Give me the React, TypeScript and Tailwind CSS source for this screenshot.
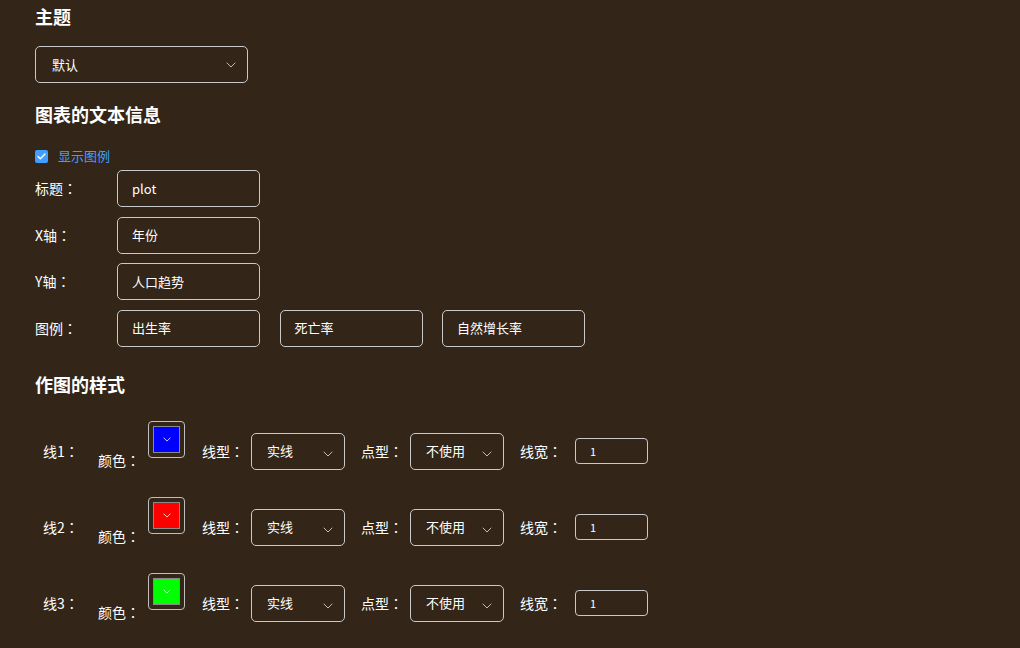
import React from "react";

const font = { fontFamily: '"Noto Sans CJK SC", "Noto Sans", sans-serif' };

function C() {
  return <span style={{ fontFamily: '"Noto Sans CJK TC", sans-serif' }}>：</span>;
}

function Chevron({ className }: { className?: string }) {
  return (
    <svg className={className} width="10" height="6" viewBox="0 0 10 6" fill="none">
      <path d="M1 1l4 4 4-4" stroke="currentColor" strokeWidth="1" strokeLinecap="round" strokeLinejoin="round" />
    </svg>
  );
}

function TextBox({ value }: { value: string }) {
  return (
    <div className="flex h-[37px] w-[143px] items-center rounded-[5px] border border-[#c9c9c9] pl-[14px] text-[13px] text-white">
      {value}
    </div>
  );
}

function LineSelect({ value }: { value: string }) {
  return (
    <div className="flex h-[37px] w-[94px] items-center justify-between rounded-[5px] border border-[#c9c9c9] pl-[15px] pr-[11px] text-[13px] text-white">
      <span>{value}</span>
      <Chevron className="mt-[5px] text-[#bdbdbd]" />
    </div>
  );
}

function LineRow({ n, color }: { n: number; color: string }) {
  return (
    <div className="flex h-[37px] items-center text-[14px] text-white">
      <span className="ml-[8px] w-[55px]">
        线{n}
        <C />
      </span>
      <div className="flex items-center">
        <span className="mt-[18px] w-[50px]">
          颜色
          <C />
        </span>
        <div className="mb-[23px] flex h-[37px] w-[37px] items-center justify-center rounded-[4px] border border-[#bfbfbf]">
          <div
            className="flex h-[27px] w-[27px] items-center justify-center border border-[#8a8a8a]"
            style={{ backgroundColor: color }}
          >
            <Chevron className="h-[5px] w-[8px] text-white" />
          </div>
        </div>
      </div>
      <span className="ml-[17px] w-[49px]">
        线型
        <C />
      </span>
      <LineSelect value="实线" />
      <span className="ml-[16px] w-[49px]">
        点型
        <C />
      </span>
      <LineSelect value="不使用" />
      <span className="ml-[16px] w-[55px]">
        线宽
        <C />
      </span>
      <div className="flex h-[26px] w-[73px] items-center rounded-[4px] border border-[#c9c9c9] pl-[14px] text-[11px] text-white">
        1
      </div>
    </div>
  );
}

function FieldRow({ label, children }: { label: string; children: React.ReactNode }) {
  return (
    <div className="flex items-center text-[14px] text-white">
      <span className="w-[82px]">
        {label}
        <C />
      </span>
      {children}
    </div>
  );
}

export default function App() {
  return (
    <div className="min-h-[648px] w-full bg-[#332619] pl-[35px] pt-[4px]" style={font}>
      <div className="h-[24px] text-[18px] font-bold leading-[24px] text-white">主题</div>
      <div className="mt-[18px] flex h-[37px] w-[213px] items-center justify-between rounded-[5px] border border-[#c9c9c9] pl-[16px] pr-[11px] text-[13px] text-white">
        <span>默认</span>
        <Chevron className="text-[#bdbdbd]" />
      </div>
      <div className="mt-[19px] h-[24px] text-[18px] font-bold leading-[24px] text-white">图表的文本信息</div>
      <div className="mt-[20px] flex h-[20px] items-center">
        <div className="flex h-[13px] w-[13px] items-center justify-center rounded-[2px] bg-[#409eff]">
          <svg width="9" height="7" viewBox="0 0 9 7" fill="none">
            <path d="M1 3.5l2.3 2.2L8 1" stroke="white" strokeWidth="1.3" strokeLinecap="round" strokeLinejoin="round" />
          </svg>
        </div>
        <span className="ml-[10px] text-[13px] text-[#409eff]">显示图例</span>
      </div>
      <div className="mt-[4px] flex flex-col gap-[9.5px]">
        <FieldRow label="标题">
          <TextBox value="plot" />
        </FieldRow>
        <FieldRow label="X轴">
          <TextBox value="年份" />
        </FieldRow>
        <FieldRow label="Y轴">
          <TextBox value="人口趋势" />
        </FieldRow>
        <FieldRow label="图例">
          <div className="flex gap-[19.5px]">
            <TextBox value="出生率" />
            <TextBox value="死亡率" />
            <TextBox value="自然增长率" />
          </div>
        </FieldRow>
      </div>
      <div className="mt-[25px] h-[24px] text-[18px] font-bold leading-[24px] text-white">作图的样式</div>
      <div className="mt-[37px] flex flex-col gap-[39px] pb-[20px]">
        <LineRow n={1} color="#0000ff" />
        <LineRow n={2} color="#ff0000" />
        <LineRow n={3} color="#00ff00" />
      </div>
    </div>
  );
}
